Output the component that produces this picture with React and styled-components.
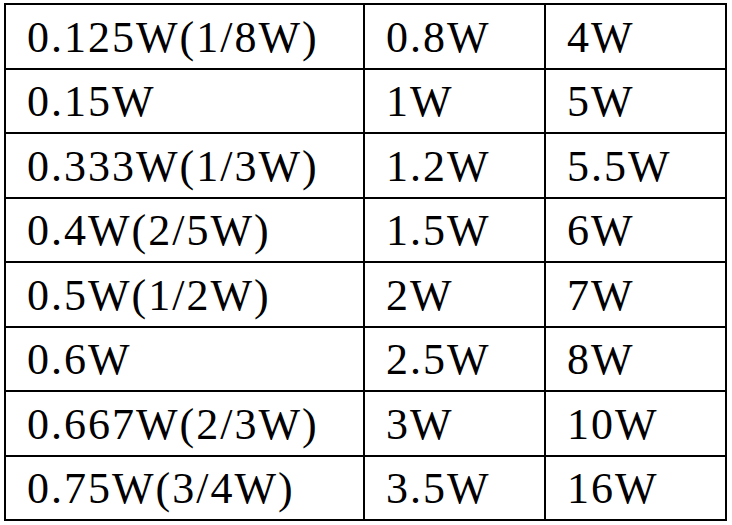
import React from 'react';
import styled, { createGlobalStyle } from 'styled-components';

const widths = [359, 181, 181];

const rows = [
  ['0.125W(1/8W)', '0.8W', '4W'],
  ['0.15W', '1W', '5W'],
  ['0.333W(1/3W)', '1.2W', '5.5W'],
  ['0.4W(2/5W)', '1.5W', '6W'],
  ['0.5W(1/2W)', '2W', '7W'],
  ['0.6W', '2.5W', '8W'],
  ['0.667W(2/3W)', '3W', '10W'],
  ['0.75W(3/4W)', '3.5W', '16W'],
];

export default function App() {
  return (
    <>
      <GlobalStyle />
      <Page>
        <Table>
          <colgroup>
            {widths.map((w, i) => (
              <Col key={i} $w={w} />
            ))}
          </colgroup>
          <tbody>
            {rows.map((r, i) => (
              <Row key={i}>
                {r.map((c, j) => (
                  <Cell key={j}>{c}</Cell>
                ))}
              </Row>
            ))}
          </tbody>
        </Table>
      </Page>
    </>
  );
}

const GlobalStyle = createGlobalStyle`
  body {
    margin: 0;
    background: #fff;
  }
`;

const Page = styled.div`
  padding: 3px 0 0 4px;
`;

const Table = styled.table`
  border-collapse: collapse;
  table-layout: fixed;
  width: 721px;
  border: 2px solid #000;
  font-family: "Liberation Serif", "Times New Roman", serif;
  font-size: 44px;
  color: #000;
`;

const Col = styled.col`
  width: ${p => p.$w}px;
`;

const Row = styled.tr`
  height: 64.5px;
`;

const Cell = styled.td`
  border: 2px solid #000;
  padding: 4px 0 0 21px;
  letter-spacing: 2px;
  vertical-align: middle;
  white-space: nowrap;
  line-height: 1.15;
`;
